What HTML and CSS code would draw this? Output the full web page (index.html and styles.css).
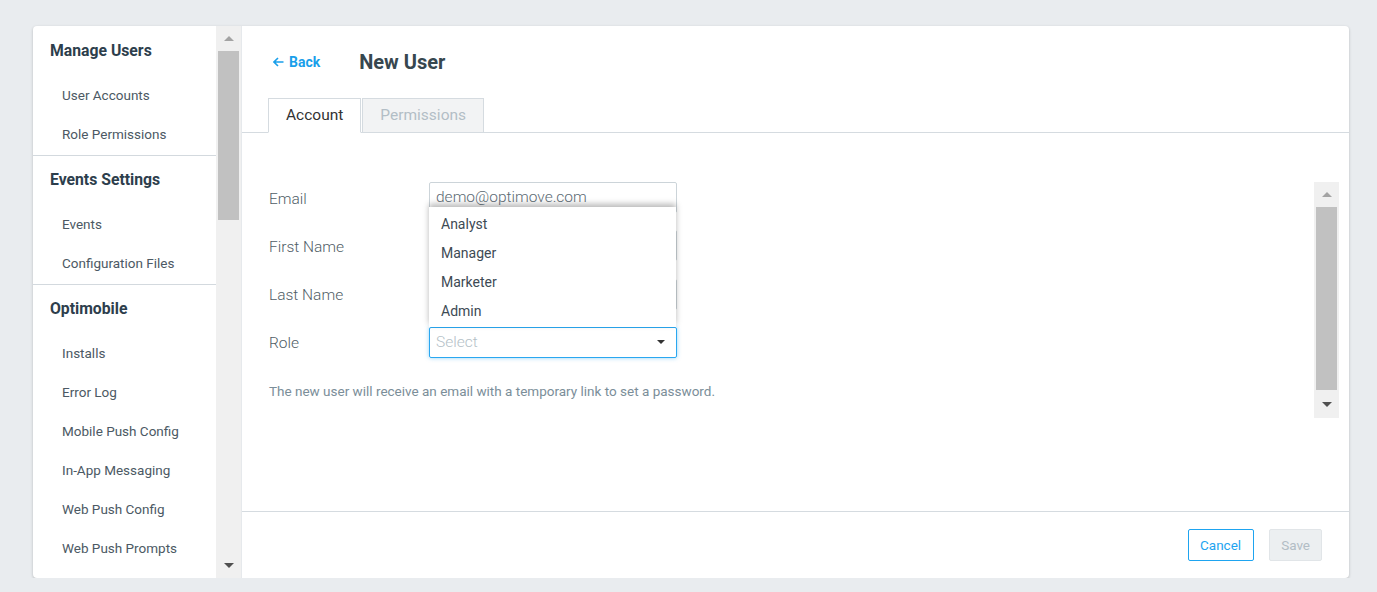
FILE: index.html
```html
<!DOCTYPE html>
<html lang="en">
<head>
  <meta charset="UTF-8" />
  <title>New User</title>
  <link rel="stylesheet" href="styles.css">
</head>
<body>

  <div class="card">

    <!-- Sidomeny -->
    <div class="sidebar">
      <div class="side-list">
        <div class="side-section">
          <div class="side-heading">Manage Users</div>
          <div class="side-item">User Accounts</div>
          <div class="side-item">Role Permissions</div>
        </div>
        <div class="side-section">
          <div class="side-heading">Events Settings</div>
          <div class="side-item">Events</div>
          <div class="side-item">Configuration Files</div>
        </div>
        <div class="side-section last">
          <div class="side-heading">Optimobile</div>
          <div class="side-item">Installs</div>
          <div class="side-item">Error Log</div>
          <div class="side-item">Mobile Push Config</div>
          <div class="side-item">In-App Messaging</div>
          <div class="side-item">Web Push Config</div>
          <div class="side-item">Web Push Prompts</div>
        </div>
      </div>
      <div class="scrollbar side-scroll">
        <div class="sb-btn"><span class="tri-up"></span></div>
        <div class="sb-track"><div class="sb-thumb side-thumb"></div></div>
        <div class="sb-btn"><span class="tri-down"></span></div>
      </div>
    </div>

    <!-- Innehåll -->
    <div class="main">
      <div class="main-head">
        <div class="title-row">
          <a class="back-link" href="#">
            <svg width="11" height="10" viewBox="0 0 11 10"><path d="M5 1 L1 5 L5 9 M1 5 H10.5" fill="none" stroke="currentColor" stroke-width="1.6"/></svg>
            Back
          </a>
          <h1 class="page-title">New User</h1>
        </div>
        <div class="tabs">
          <div class="tab active">Account</div>
          <div class="tab">Permissions</div>
        </div>
      </div>

      <div class="main-body">
        <div class="form">
          <div class="form-row">
            <label>Email</label>
            <div class="input">demo@optimove.com</div>
          </div>
          <div class="form-row">
            <label>First Name</label>
            <div class="input"></div>
          </div>
          <div class="form-row">
            <label>Last Name</label>
            <div class="input"></div>
          </div>
          <div class="form-row">
            <label>Role</label>
            <div class="select-wrap">
              <div class="dropdown">
                <div class="dd-item">Analyst</div>
                <div class="dd-item">Manager</div>
                <div class="dd-item">Marketer</div>
                <div class="dd-item">Admin</div>
              </div>
              <div class="input select">
                <span class="placeholder">Select</span>
                <span class="caret"></span>
              </div>
            </div>
          </div>
          <p class="help">The new user will receive an email with a temporary link to set a password.</p>
        </div>
        <div class="scrollbar form-scroll">
          <div class="sb-btn"><span class="tri-up"></span></div>
          <div class="sb-track"><div class="sb-thumb form-thumb"></div></div>
          <div class="sb-btn low"><span class="tri-down"></span></div>
        </div>
      </div>

      <div class="footer">
        <button class="btn btn-cancel">Cancel</button>
        <button class="btn btn-save">Save</button>
      </div>
    </div>

  </div>

</body>
</html>
```

FILE: styles.css
```css
body {
  margin: 0;
  font-family: Roboto, "Liberation Sans", sans-serif;
  background-color: #e9ecef;
  padding: 26px 28px 0 33px;
}

.card {
  display: flex;
  width: 1316px;
  height: 552px;
  background-color: #fff;
  border-radius: 4px;
  box-shadow: 0 1px 3px rgba(0, 0, 0, 0.22);
  overflow: hidden;
}

/* Sidomeny */

.sidebar {
  display: flex;
  width: 208px;
  flex-shrink: 0;
  border-right: 1px solid #e6e9ec;
}

.side-list {
  width: 183px;
  padding-top: 1px;
  overflow: hidden;
}

.side-section {
  padding: 14px 0 1px 0;
  border-bottom: 1px solid #d3d9de;
}

.side-section.last {
  border-bottom: none;
}

.side-heading {
  padding: 1px 0 0 17px;
  font-size: 15.75px;
  font-weight: bold;
  line-height: 18px;
  color: #2d3e4c;
  margin-bottom: 16px;
}

.side-item {
  padding-left: 29px;
  font-size: 13.5px;
  line-height: 39px;
  color: #4c5964;
  white-space: nowrap;
}

/* Rullningslister */

.scrollbar {
  display: flex;
  flex-direction: column;
  background-color: #f0f0f0;
}

.side-scroll {
  width: 25px;
}

.sb-btn {
  height: 25px;
  display: flex;
  align-items: center;
  justify-content: center;
  flex-shrink: 0;
}

.sb-btn.low {
  height: 28px;
}

.sb-track {
  flex: 1;
  position: relative;
}

.sb-thumb {
  background-color: #c1c1c1;
  margin: 0 2px;
}

.side-thumb {
  height: 169px;
}

.form-thumb {
  height: 100%;
}

.tri-up {
  width: 0;
  height: 0;
  border-left: 5px solid transparent;
  border-right: 5px solid transparent;
  border-bottom: 5px solid #a3a3a3;
}

.tri-down {
  width: 0;
  height: 0;
  border-left: 5px solid transparent;
  border-right: 5px solid transparent;
  border-top: 5px solid #505050;
}

/* Innehåll */

.main {
  flex: 1;
  display: flex;
  flex-direction: column;
}

.main-head {
  padding: 24px 0 0 26px;
  border-bottom: 1px solid #d5dbe0;
}

.title-row {
  display: flex;
  align-items: center;
  height: 24px;
}

.back-link {
  display: flex;
  align-items: center;
  gap: 5px;
  margin-left: 5px;
  color: #1a9fea;
  font-size: 14px;
  font-weight: bold;
  text-decoration: none;
}

.page-title {
  margin: 0 0 0 39px;
  font-size: 20px;
  font-weight: bold;
  color: #37474f;
}

.tabs {
  display: flex;
  margin-top: 24px;
  margin-bottom: -1px;
}

.tab {
  height: 33px;
  line-height: 33px;
  padding: 0 17px;
  font-size: 15.5px;
  color: #b3bec6;
  background-color: #f2f3f4;
  border: 1px solid #d5dbe0;
  margin-right: 1px;
}

.tab.active {
  color: #333;
  background-color: #fff;
  border-bottom-color: #fff;
}

.main-body {
  flex: 1;
  display: flex;
  align-items: flex-start;
  padding: 49px 10px 0 26px;
}

.form {
  flex: 1;
}

.form-row {
  display: flex;
  align-items: center;
  margin-bottom: 17.33px;
}

.form-row label {
  width: 160px;
  padding: 2px 0 0 1px;
  font-size: 15.5px;
  font-weight: 300;
  color: #505d66;
}

.input {
  box-sizing: border-box;
  width: 248px;
  height: 31px;
  border: 1px solid #ccd4d9;
  border-radius: 2px;
  padding: 0 6px;
  font-size: 15.5px;
  font-weight: 300;
  line-height: 29px;
  color: #5d6b74;
}

.select-wrap {
  position: relative;
}

.input.select {
  display: flex;
  align-items: center;
  justify-content: space-between;
  border-color: #2aa7f0;
  box-shadow: 0 0 4px rgba(42, 167, 240, 0.5);
  padding-right: 11px;
}

.placeholder {
  color: #b4bfc7;
}

.caret {
  width: 0;
  height: 0;
  border-left: 4px solid transparent;
  border-right: 4px solid transparent;
  border-top: 4px solid #333;
}

.dropdown {
  position: absolute;
  left: 0;
  bottom: 100%;
  width: 247px;
  padding: 3px 0 1px 0;
  background-color: #fff;
  box-shadow: 0 -3px 6px rgba(0, 0, 0, 0.28);
  z-index: 2;
}

.dd-item {
  padding-left: 12px;
  font-size: 14px;
  line-height: 29px;
  color: #3d4a54;
}

.help {
  margin: 23px 0 0 1px;
  font-size: 13.5px;
  line-height: 20px;
  color: #7b8e99;
}

.form-scroll {
  width: 25px;
  height: 236px;
}

/* Knappar */

.footer {
  display: flex;
  justify-content: flex-end;
  gap: 15px;
  padding: 17px 27px 17px 0;
  border-top: 1px solid #d5dbe0;
}

.btn {
  height: 32px;
  font-family: inherit;
  font-size: 13.5px;
  border-radius: 2px;
  padding: 0 11px;
}

.btn-cancel {
  background-color: #fff;
  border: 1px solid #1ea4f0;
  color: #1ea4f0;
  padding: 0 12px 0 11px;
}

.btn-save {
  background-color: #eceff1;
  border: 1px solid #e1e5e8;
  color: #b2bdc5;
  padding: 0 11px;
}
```
